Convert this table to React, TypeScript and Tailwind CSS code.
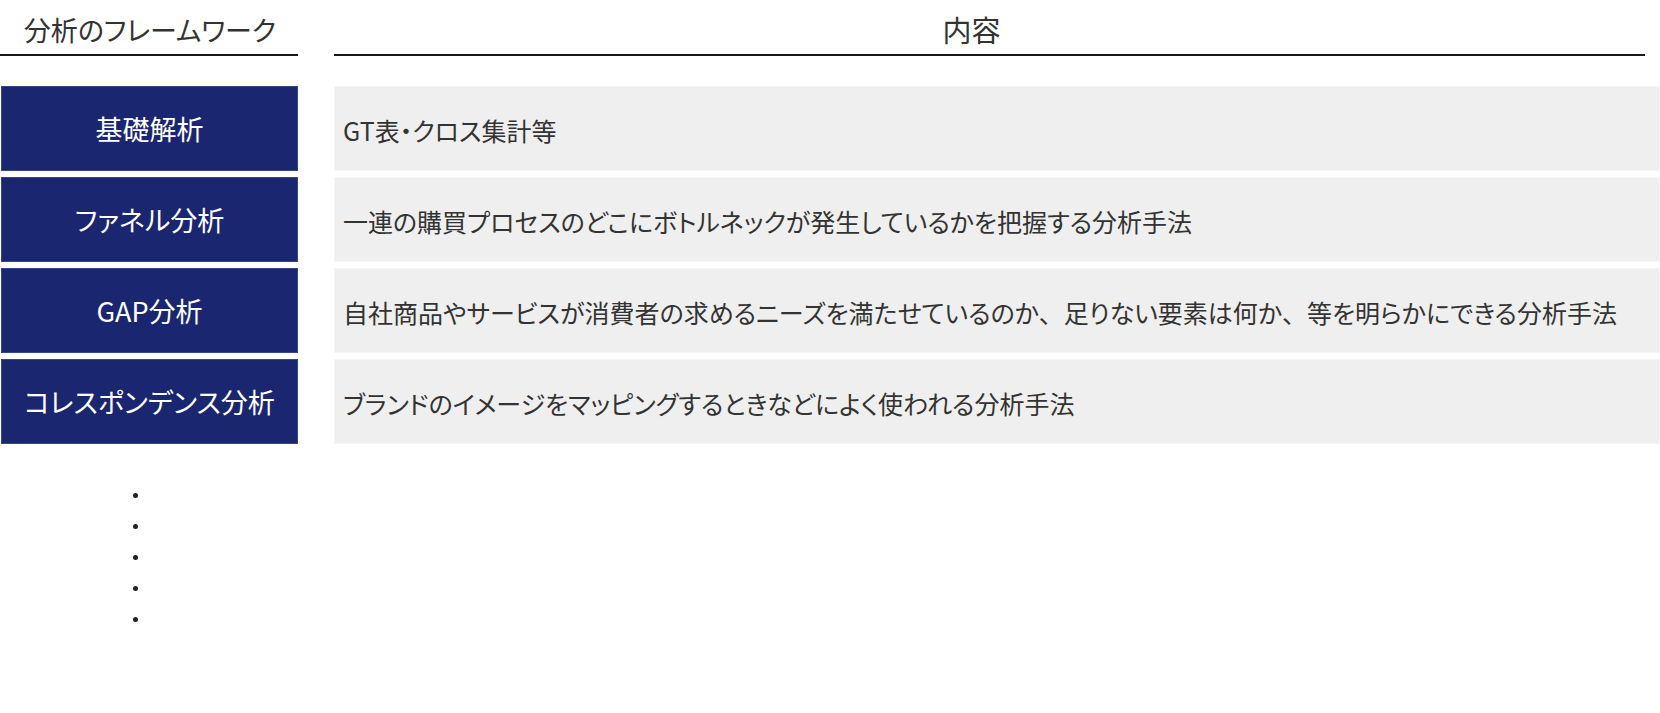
import React from "react";

const rows = [
  { name: "基礎解析", desc: "GT表・クロス集計等" },
  { name: "ファネル分析", desc: "一連の購買プロセスのどこにボトルネックが発生しているかを把握する分析手法" },
  { name: "GAP分析", desc: "自社商品やサービスが消費者の求めるニーズを満たせているのか、足りない要素は何か、等を明らかにできる分析手法" },
  { name: "コレスポンデンス分析", desc: "ブランドのイメージをマッピングするときなどによく使われる分析手法" },
];

function Desc({ text }: { text: string }) {
  const parts = text.split("、");
  return (
    <>
      {parts.map((p, i) => (
        <React.Fragment key={i}>
          {p}
          {i < parts.length - 1 && <span className="[font-feature-settings:normal]">、</span>}
        </React.Fragment>
      ))}
    </>
  );
}

export default function App() {
  return (
    <div
      className="w-[1660px] h-[713px] bg-white overflow-hidden [font-feature-settings:'palt'] text-[#333333]"
      style={{ fontFamily: '"Noto Sans CJK JP", "Noto Sans", sans-serif' }}
    >
      <div className="grid grid-cols-[298px_1fr] gap-x-[36px]">
        <div className="h-[56px] border-b-2 border-[#1a1a1a] flex items-center justify-center pt-[4px] pl-[2px]">
          <span className="text-[27px] leading-none">分析のフレームワーク</span>
        </div>
        <div className="h-[56px] mr-[15px] border-b-2 border-[#1a1a1a] flex items-center justify-center pt-[4px] pr-[36px]">
          <span className="text-[29px] leading-none">内容</span>
        </div>
      </div>
      <div className="mt-[30px] flex flex-col gap-[6px]">
        {rows.map((r) => (
          <div key={r.name} className="grid grid-cols-[298px_1fr] gap-x-[36px] h-[85px]">
            <div className="ml-[1px] bg-[#1b2670] border border-[#3a4585] flex items-center justify-center text-white text-[27px] leading-none">
              {r.name}
            </div>
            <div className="bg-[#efefef] border border-[#f6f6f6] flex items-center pl-[8px] pt-[4px] text-[25px] leading-none text-[#333333] whitespace-nowrap">
              <span>
                <Desc text={r.desc} />
              </span>
            </div>
          </div>
        ))}
      </div>
      <div className="mt-[49px] ml-[133px] flex flex-col gap-[26px]">
        {[0, 1, 2, 3, 4].map((i) => (
          <div key={i} className="w-[5px] h-[5px] rounded-full bg-[#222222]" />
        ))}
      </div>
    </div>
  );
}
